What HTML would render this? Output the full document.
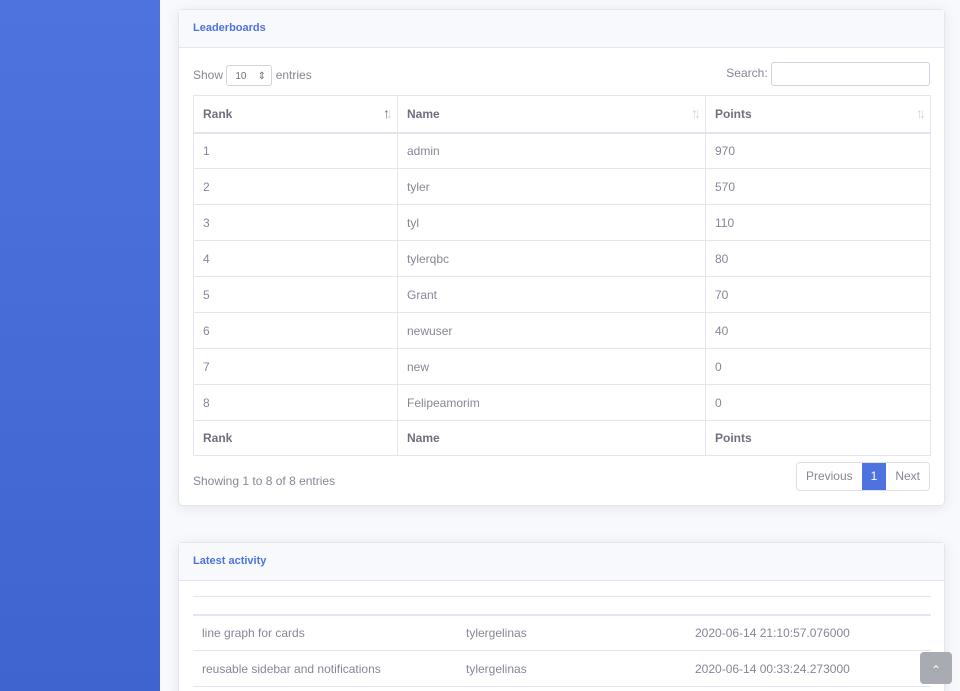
<!DOCTYPE html><html><head><style>
html,body{margin:0;width:960px;height:691px;overflow:hidden}
body{background:#f8f9fc;font-family:"Liberation Sans",sans-serif;font-size:12px;color:#858796;position:relative}
.sb{position:absolute;left:0;top:0;width:160px;height:691px;background:linear-gradient(180deg,#4e73df 0%,#3f63cf 100%)}
.card{position:absolute;left:178px;width:767px;background:#fff;border:1px solid #e3e6f0;border-radius:5px;box-shadow:0 2px 12px rgba(58,59,69,.10);box-sizing:border-box}
.ch{height:37px;background:#f8f9fc;border-bottom:1px solid #e3e6f0;color:#4e73df;font-weight:bold;font-size:11px;line-height:36px;padding-left:14px}
table{position:absolute;left:14px;width:738px;border-collapse:collapse;table-layout:fixed}
td{height:36px;border:1px solid #e3e6f0;padding:0 9px;box-sizing:border-box}
th{height:37px;border:1px solid #e3e6f0;border-bottom:2px solid #e3e6f0;text-align:left;padding:0 9px;font-weight:bold;color:#6e707e;position:relative;box-sizing:border-box}
.ar{position:absolute;right:8px;top:9px;font-size:14px;color:#d1d3e2;letter-spacing:-4px}
</style></head><body>
<div class="sb"></div>
<div class="card" style="top:9px;height:497px">
<div class="ch">Leaderboards</div>
<div style="position:absolute;left:14px;top:55px">Show <span style="display:inline-block;border:1px solid #d1d3e2;border-radius:3px;width:46px;height:21px;line-height:21px;padding-left:8px;box-sizing:border-box;font-size:10px;color:#6e707e">10 &nbsp;&nbsp;&nbsp;⇕</span> entries</div>
<div style="position:absolute;right:14px;top:52px">Search: <span style="display:inline-block;vertical-align:middle;border:1px solid #d1d3e2;border-radius:3px;width:157px;height:22px"></span></div>
<table style="top:85px">
<colgroup><col style="width:204px"><col style="width:308px"><col></colgroup>
<tr><th>Rank<span class="ar" style="color:#6e707e">↑<span style="color:#d1d3e2">↓</span></span></th><th>Name<span class="ar">↑↓</span></th><th>Points<span class="ar">↑↓</span></th></tr>
<tr><td>1</td><td>admin</td><td>970</td></tr>
<tr><td>2</td><td>tyler</td><td>570</td></tr>
<tr><td>3</td><td>tyl</td><td>110</td></tr>
<tr><td>4</td><td>tylerqbc</td><td>80</td></tr>
<tr><td>5</td><td>Grant</td><td>70</td></tr>
<tr><td>6</td><td>newuser</td><td>40</td></tr>
<tr><td>7</td><td>new</td><td>0</td></tr>
<tr><td>8</td><td>Felipeamorim</td><td>0</td></tr>
<tr><th style="border-bottom:1px solid #e3e6f0;height:35px">Rank</th><th style="border-bottom:1px solid #e3e6f0;height:35px">Name</th><th style="border-bottom:1px solid #e3e6f0;height:35px">Points</th></tr>
</table>
<div style="position:absolute;left:14px;top:464px">Showing 1 to 8 of 8 entries</div>
<div style="position:absolute;right:14px;top:452px;height:27px;border:1px solid #dddfeb;border-radius:4px;display:flex;line-height:27px;overflow:hidden">
<span style="padding:0 9px">Previous</span><span style="background:#4e73df;color:#fff;padding:0 9px">1</span><span style="padding:0 9px">Next</span></div>
</div>
<div class="card" style="top:542px;height:160px">
<div class="ch">Latest activity</div>
<div style="position:absolute;left:14px;top:53px;width:738px;border-top:1px solid #e3e6f0"></div>
<div style="position:absolute;left:14px;top:71px;width:738px;border-top:2px solid #e3e6f0"></div>
<div style="position:absolute;left:14px;top:107px;width:738px;border-top:1px solid #e3e6f0"></div>
<div style="position:absolute;left:14px;top:143px;width:738px;border-top:1px solid #e3e6f0"></div>
<div style="position:absolute;left:23px;top:83px">line graph for cards</div>
<div style="position:absolute;left:287px;top:83px">tylergelinas</div>
<div style="position:absolute;left:516px;top:83px">2020-06-14 21:10:57.076000</div>
<div style="position:absolute;left:23px;top:119px">reusable sidebar and notifications</div>
<div style="position:absolute;left:287px;top:119px">tylergelinas</div>
<div style="position:absolute;left:516px;top:119px">2020-06-14 00:33:24.273000</div>
</div>
<div style="position:absolute;left:920px;top:652px;width:32px;height:32px;background:#a9abb3;border-radius:4px;color:#fff;text-align:center;line-height:36px;font-size:12px">⌃</div>
</body></html>
